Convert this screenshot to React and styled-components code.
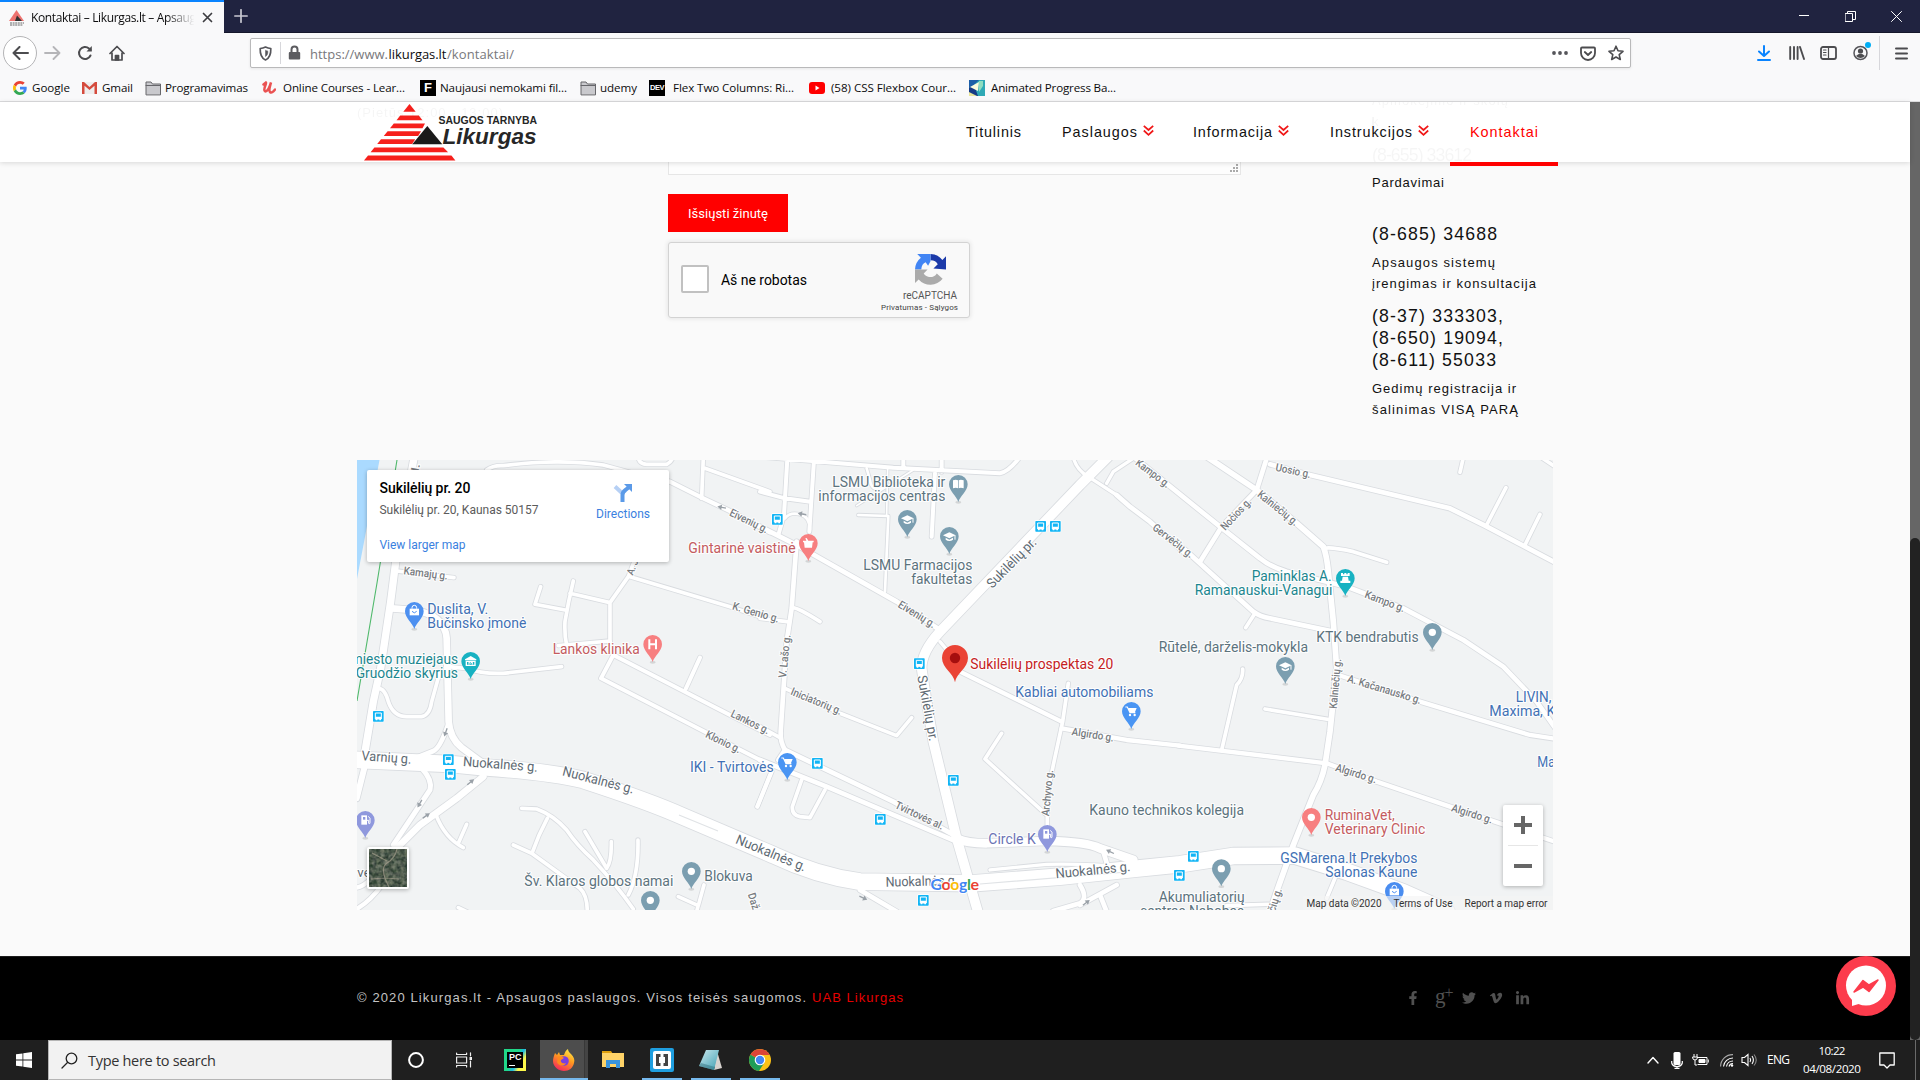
import React, { useLayoutEffect, useRef } from "react";
import styled, { createGlobalStyle, css } from "styled-components";
import { FaFacebookF, FaTwitter, FaVimeoV, FaLinkedinIn } from "react-icons/fa";

const UI = `"Open Sans", "Noto Sans", sans-serif`;
const ARIAL = `"Liberation Sans", Arial, sans-serif`;

const Global = createGlobalStyle`
  * { box-sizing: border-box; }
  body { margin: 0; background: #fafafa; overflow: hidden; }
  svg { display: block; flex: none; }
`;

/* ---------- text with a fixed measure ---------- */
const Txt = styled.span`
  display: inline-block;
  flex: none;
  white-space: nowrap;
  font-family: ${(p) => p.$font || UI};
  font-size: ${(p) => p.$size || 12}px;
  line-height: ${(p) => p.$lh || 16}px;
  font-weight: ${(p) => p.$weight || 400};
  color: ${(p) => p.$color || "#0c0c0d"};
  margin-left: ${(p) => p.$ml || 0}px;
  margin-top: ${(p) => p.$mt || 0}px;
`;

function Fit({ w, children, ...rest }) {
  const ref = useRef(null);
  useLayoutEffect(() => {
    const el = ref.current;
    el.style.width = "auto";
    el.style.letterSpacing = "0px";
    const natural = el.getBoundingClientRect().width;
    const n = Math.max(1, el.textContent.length - 1);
    el.style.letterSpacing = `${(w - natural) / n}px`;
    el.style.width = `${w}px`;
  }, [w]);
  return <Txt ref={ref} {...rest}>{children}</Txt>;
}

/* ---------- browser chrome ---------- */
const Screen = styled.div`
  width: 1920px; height: 1080px; display: flex; flex-direction: column; overflow: hidden;
`;
const TabStrip = styled.div`
  height: 33px; flex: none; display: flex; align-items: center; background: #202340;
  border-bottom: 1px solid #15172b;
`;
const Tab = styled.div`
  width: 224px; height: 33px; display: flex; align-items: center; background: #f9f9fa;
  border-top: 2px solid #0a84ff; padding-left: 9px; align-self: flex-start;
`;
const TabTitle = styled.div`
  margin-left: 6px; width: 165px; overflow: hidden; display: flex;
  mask-image: linear-gradient(90deg, #000 82%, transparent 99%);
`;
const Gap = styled.div`flex: 1;`;
const IconBox = styled.div`
  margin-left: ${(p) => p.$ml || 0}px; margin-top: ${(p) => p.$mt || 0}px; flex: none;
`;
const ToolBar = styled.div`
  height: 41px; flex: none; display: flex; align-items: center; background: #f9f9fa; padding: 0 0 1px 3px;
`;
const BackButton = styled.div`
  width: 34px; height: 34px; border-radius: 50%; border: 1px solid #b4b4b6; background: #fff;
  display: grid; place-items: center;
`;
const UrlBar = styled.div`
  margin-left: 125px; width: 1381px; height: 30px; border: 1px solid #b9b9ba; border-radius: 2px;
  background: #fff; display: flex; align-items: center; box-shadow: 0 1px 3px rgba(0,0,0,.08);
`;
const Divider = styled.div`
  width: 1px; height: ${(p) => p.$h}px; background: #d7d7db; margin-left: ${(p) => p.$ml}px;
`;
const Bookmarks = styled.div`
  height: 28px; flex: none; display: flex; align-items: center; background: #f9f9fa;
  border-bottom: 1px solid #dcdcde; padding-left: 13px;
`;
const Bookmark = styled.div`
  display: flex; align-items: center; width: ${(p) => p.$w}px; flex: none;
`;
const BookIcon = styled.div`width: ${(p) => p.$w}px; flex: none;`;
const SquareIcon = styled.div`
  width: 16px; height: 16px; background: #000; color: #fff; text-align: center;
  font: ${(p) => p.$font}; letter-spacing: ${(p) => p.$ls || 0}px;
`;

const S = ({ w = 16, h = 16, vb, children, sw = 1.8, c = "#4c4c4f", fill = "none" }) => (
  <svg width={w} height={h} viewBox={vb || `0 0 ${w} ${h}`} fill={fill} stroke={c} strokeWidth={sw} strokeLinecap="round" strokeLinejoin="round">{children}</svg>
);

const Folder = () => (
  <S sw="1" c="#66666a" fill="#c9c9cd"><path d="M1 14.5V2h5l1.5 2H15.5v10.5z" /><path d="M1 5.500h14.500" /></S>
);
const bookmarks = [
  [69, 19, "Google", 38, <svg width="14" height="14" viewBox="0 0 48 48"><path fill="#EA4335" d="M24 9.5c3.5 0 6.700 1.200 9.200 3.600l6.900-6.900C35.900 2.400 30.500 0 24 0 14.600 0 6.500 5.400 2.600 13.200l8 6.200C12.400 13.700 17.700 9.500 24 9.500z" /><path fill="#4285F4" d="M47 24.600c0-1.600-.2-3.100-.4-4.600H24v9h12.900c-.6 3-2.200 5.500-4.800 7.200l7.700 6C44.400 38 47 31.800 47 24.600z" /><path fill="#FBBC05" d="M10.500 28.600c-.5-1.500-.8-3-.8-4.600s.3-3.100.8-4.600l-8-6.200C.9 16.500 0 20.100 0 24s.9 7.500 2.600 10.800z" /><path fill="#34A853" d="M24 48c6.500 0 11.900-2.100 15.900-5.800l-7.700-6c-2.200 1.500-4.900 2.300-8.200 2.300-6.300 0-11.600-4.200-13.500-9.900l-8 6.200C6.500 42.600 14.600 48 24 48z" /></svg>],
  [63, 20, "Gmail", 31, <svg width="15" height="12" viewBox="0 0 15 12"><rect width="15" height="12" fill="#eee" /><path d="M0 0h2l5.500 5L13 0h2v12h-2.500V3.800l-5 4.200-5-4.200V12H0z" fill="#d54b3d" /></svg>],
  [117, 20, "Programavimas", 83, <Folder />],
  [158, 21, "Online Courses - Lear...", 122, <svg width="14" height="13" viewBox="0 0 14 13" fill="none" stroke="#ea5252" strokeWidth="2.500" strokeLinecap="round"><path d="M1.500 3.500 4 1.500C4.800 2 1.500 7 2.500 9.500 3.500 12 6.500 9 8 4.500l1-3C8 5 6.500 9.500 8 11s3.500-.5 5-2.500" /></svg>],
  [160, 20, "Naujausi nemokami fil...", 127, <SquareIcon $font={`bold 13px/16px ${ARIAL}`}>F</SquareIcon>],
  [69, 20, "udemy", 37, <Folder />],
  [160, 24, "Flex Two Columns: Ri...", 121, <SquareIcon $font={`bold 7.5px/16px ${ARIAL}`} $ls={-0.5}>DEV</SquareIcon>],
  [160, 22, "(58) CSS Flexbox Cour...", 125, <svg width="16" height="12" viewBox="0 0 16 12"><rect width="16" height="12" rx="3" fill="#f00" /><path d="M6.500 3.500v5l4-2.500z" fill="#fff" /></svg>],
  [160, 22, "Animated Progress Ba...", 125, <svg width="16" height="16" viewBox="0 0 16 16"><path d="M0 0h16v16H0z" fill="#2fa9b5" /><path d="M0 0h10L5 5 0 8z" fill="#1c5fa8" /><path d="M0 8l5-3 4 11H0z" fill="#173b86" /><path d="M1 7 10 2l-1 9z" fill="#fbfbdd" /><path d="M10 1l4 0 0 5-4 6z" fill="#8fdcc0" /><path d="M0 12l8 4H0z" fill="#e8e59a" /></svg>],
];

/* ---------- site ---------- */
const PageRow = styled.div`height: 938px; flex: none; display: flex; position: relative;`;
const Site = styled.div`width: 1910px; background: #fafafa; display: flex; flex-direction: column;`;
const Scroll = styled.div`width: 10px; background: #666; padding-top: 436px;`;
const Thumb = styled.div`height: 502px; background: #222; border-radius: 5px;`;
const Header = styled.header`
  height: 60px; flex: none; display: flex; background: #fff; position: relative; z-index: 2;
  box-shadow: 0 1px 5px rgba(0,0,0,.14); padding-left: 360px;
`;
const Ghost = styled.div`
  position: absolute; overflow: hidden; opacity: .035; left: ${(p) => p.$x}px; top: 0; height: 60px;
  display: flex; flex-direction: column;
`;
const Nav = styled.nav`display: flex; margin-left: 406px;`;
const NavItem = styled.div`
  height: ${(p) => (p.$active ? 64 : 60)}px; padding: 0 20px; width: ${(p) => p.$w}px;
  border-bottom: ${(p) => (p.$active ? "4px solid #f00" : "0")}; display: flex; align-items: flex-start;
`;
const FormArea = styled.section`height: 298px; flex: none; display: flex; padding-left: 668px;`;
const FormCol = styled.div`width: 573px; display: flex; flex-direction: column; align-items: flex-start;`;
const TextArea = styled.div`
  width: 573px; height: 13px; border: 1px solid #e6e6e6; border-top: 0; background: #fdfdfd;
  display: flex; justify-content: flex-end; padding: 2px 2px 0 0;
`;
const Send = styled.div`
  width: 120px; height: 38px; margin-top: 19px; background: #f00; display: flex; align-items: center; justify-content: center;
`;
const Captcha = styled.div`
  width: 302px; height: 76px; margin-top: 10px; border: 1px solid #d3d3d3; border-radius: 3px; background: #f9f9f9;
  box-shadow: 0 0 4px 1px rgba(0,0,0,.08); display: flex; align-items: center; padding-left: 12px;
`;
const Check = styled.div`width: 28px; height: 28px; border: 2px solid #c1c1c1; border-radius: 2px; background: #fff; margin-top: -2px;`;
const Brand = styled.div`width: 78px; margin-left: 73px; height: 74px; display: flex; flex-direction: column; align-items: flex-end; padding-top: 11px;`;
const BrandMark = styled.div`margin-right: 12px;`;
const BrandName = styled.div`display: flex; margin-right: 1px;`;
const Contacts = styled.div`margin-left: 131px; display: flex; flex-direction: column; align-items: flex-start; padding-top: 10px;`;
const Footer = styled.footer`
  height: 84px; flex: none; margin-top: auto; background: #000; border-top: 1px solid #1c1c1c;
  display: flex; align-items: center; padding-left: 357px; position: relative;
`;
const Socials = styled.div`display: flex; align-items: center; margin: -1px 0 0 503px; color: #505050;`;
const GPlus = styled.span`display: flex; font: 21px/16px "Liberation Serif", serif; margin: -5px 0 0 15px; width: 27px;`;
const Plus = styled.span`font-size: 16px; line-height: 10px; margin-left: -1px;`;
const Messenger = styled.div`position: absolute; left: 1836px; top: -1px;`;

const Chevron = () => (
  <IconBox $ml={6} $mt={23}>
    <svg width="11" height="11" viewBox="0 0 11 11" fill="none" stroke="#f01818" strokeWidth="1.700"><path d="M.8.800 5.500 5 10.200.800M.8 5.500l4.700 4.300 4.700-4.300" /></svg>
  </IconBox>
);

const Logo = () => (
  <svg width="180" height="60" viewBox="360 102 180 60">
    <g fill="#f6201c">
      <path d="M409.500 104l6.200 7.700h-12.400z" />
      <path d="M400.200 115.600h18.600l3.700 4.700h-26z" />
      <path d="M393.800 123.600H425l-2.500 4.700h-32.500z" />
      <path d="M387.600 131.300h33.400l-2.800 4.700h-34.400z" />
      <path d="M381 139.300h34.200l-3 4.700h-35z" />
      <path d="M374.400 147.600h69l4.700 4.700h-77.500z" />
      <path d="M368 155.600h83.400l4 4.900h-91.400z" />
    </g>
    <path d="M427.300 126 442.300 144.200h-30z" fill="#1a1a1a" />
    <g fontFamily={ARIAL} fontWeight="bold" fill="#262626">
      <text x="438.500" y="124.300" fontSize="11" textLength="98.500" lengthAdjust="spacingAndGlyphs">SAUGOS TARNYBA</text>
      <text x="442.500" y="144.300" fontSize="22" fontStyle="italic" textLength="94" lengthAdjust="spacingAndGlyphs">Likurgas</text>
    </g>
  </svg>
);

/* ---------- map drawing: three side-by-side sheets at 3 units per pixel ---------- */
const SHEET_X = [350, 760, 1160];
const roads = [
  // sheet, width, path
  [0, 22, "M192 10L145 260L122 440L92 640L70 740L45 890"],
  [0, 18, "M20 1030L44 935"],
  [0, 11, "M140 348L312 368"],
  [0, 20, "M125 460L190 465Q285 480 290 550L296 800Q300 850 335 878L405 930"],
  [0, 14, "M294 810Q270 880 250 888L190 912"],
  [0, 11, "M85 700Q105 700 115 740Q130 785 170 785L215 785Q240 780 245 740L270 650"],
  [0, 11, "M296 635L345 640Q400 658 460 655L635 635"],
  [0, 15, "M215 940Q248 975 240 1005L130 1170"],
  [0, 20, "M400 965L320 1030L210 1110L130 1190"],
  [0, 13, "M20 1362Q60 1340 100 1285L150 1180"],
  [0, 13, "M20 1298Q60 1290 110 1210"],
  [0, 11, "M258 1080Q285 1150 340 1178M350 1108L325 1165"],
  [0, 11, "M515 1060L560 1062Q610 1080 650 1125Q680 1170 730 1215Q800 1290 850 1362M592 1090Q565 1140 548 1190M490 1170L545 1195L690 1300Q712 1320 712 1370M705 1130L770 1240M784 1160Q785 1220 770 1240M864 1155Q866 1260 835 1320M985 1325L1045 1352L1062 1290M1045 1350L1040 1370M325 1358L350 1370"],
  [0, 11, "M572 395L555 448L645 465M670 378Q655 440 645 500Q643 540 650 570M660 415L780 443M852 320L835 365L780 443L780 560M625 572L780 558M840 365L1140 455L1240 488"],
  [0, 12, "M780 560L790 600L753 670L1060 828L1260 930M790 600L1140 780L1260 840M1050 608L1008 700M1222 1055L1265 950"],
  [0, 11, "M410 45Q430 30 460 32Q620 10 760 30Q860 60 960 80M865 10Q870 28 890 28L950 28Q965 20 968 8M1060 8L1055 130M1065 40L1260 110"],
  [0, 13, "M960 80L1060 130L1140 168L1260 232"],
  [1, 12, "M0 5L400 38L720 55Q745 50 775 12M82 12L72 180L55 240M162 15L148 230M0 110L75 130L150 140M430 8V38M545 8V50M525 55L515 245"],
  [1, 8, "M75 190Q90 170 120 178Q150 185 150 225M320 40L330 75Q335 110 365 100"],
  [1, 5, "M383 40L380 180M290 152L460 45"],
  [1, 8, "M295 180L385 183L375 410"],
  [1, 14, "M0 215L100 265L410 440L540 525"],
  [1, 14, "M110 260L95 460L80 560L62 830Q60 860 75 885L55 915"],
  [1, 11, "M95 458Q110 455 180 500M0 490L80 500M75 700L240 775L410 842L455 788M0 815L60 848M30 960L-8 1055M125 975L97 1055Q95 1080 120 1085L150 1088L195 1005"],
  [1, 14, "M75 885L400 1040L590 1145M0 915L200 995L590 1160"],
  [1, 10, "M940 8Q950 45 985 65M1120 10L1060 50L1040 85M985 65L1070 120M540 560L565 590"],
  [1, 14, "M1070 120L1110 155L1170 200L1270 290"],
  [1, 13, "M600 650L905 800M905 820L1100 855L1260 872"],
  [1, 11, "M925 685L908 800L880 930L862 1020L862 1150M725 835L675 912L860 1080"],
  [1, 10, "M690 1245L860 1228Q1000 1225 1120 1240"],
  [1, 14, "M1030 1190L1045 1240M960 1290Q985 1330 960 1345L880 1368M1070 1290L960 1350M1020 1320L1040 1370M300 1305L410 1370"],
  [2, 14, "M-80 5L180 215L300 310Q330 335 380 350L560 395L730 460L910 555L1030 635L1130 740L1190 825"],
  [2, 14, "M320 10L290 105L185 215L120 320"],
  [2, 14, "M330 28L450 60L870 160L975 212L1190 325"],
  [2, 11, "M910 8L900 52M1038 98L980 210M1140 178L1095 270M1145 8L1190 38M495 280Q510 275 580 290L680 322"],
  [2, 14, "M70 280L280 470Q300 485 330 490L520 530"],
  [2, 11, "M285 475L257 518M248 642Q250 670 230 690L185 885M315 762L515 795M525 1270L500 1330M200 1352L325 1348"],
  [2, 13, "M535 660L780 740L1110 840L1190 852M55 872L500 925"],
  [2, 13, "M500 925L650 980L870 1055L1190 1162"],
  [2, 17, "M140 5L290 105L410 205L490 275Q500 300 505 350L520 500L530 640L510 830L495 930Q485 980 460 1020L400 1170L350 1310L330 1370"],
  [1, 26, "M590 1150Q620 1165 680 1165L860 1158Q980 1160 1020 1180L1120 1215"],
  [1, 29, "M1045 5L960 90L540 530Q485 590 485 640L500 740L520 860L590 1150L655 1375"],
  [0, 50, "M10 914L300 927L400 937Q600 950 700 975Q900 1040 1000 1085L1270 1200Q1400 1262 1530 1280L1870 1285L2130 1265L2350 1242L2490 1228L2650 1203L2835 1202L2990 1250L3160 1312L3290 1370"],
];
const RoadLayer = ({ extra, color }) => roads.map(([s, w, d], i) => (
  <path key={i} transform={`translate(${SHEET_X[s]} 455) scale(.3333)`} d={d} fill="none" stroke={color} strokeWidth={w + extra} strokeLinecap="round" strokeLinejoin="round" />
));

const C = { gray: "#5c737d", blue: "#4171b5", red: "#c45b5f", teal: "#1b868f", road: "#777b7f", main: "#5e6a73", pur: "#6b73b5", pin: "#c5221f" };
const labels = [
  // sheet, x1, y1, x2, y2, text, size, colour
  [0, 232, 477, 415, 477, "Duslita, V.", 42, C.blue], [0, 232, 519, 529, 519, "Bučinsko įmonė", 42, C.blue],
  [0, 2, 627, 324, 627, "miesto muziejaus", 42, C.teal], [0, 17, 669, 324, 669, "Gruodžio skyrius", 42, C.teal],
  [0, 608, 597, 869, 597, "Lankos klinika", 42, C.red],
  [0, 523, 1293, 970, 1293, "Šv. Klaros globos namai", 42, C.gray], [0, 1063, 1278, 1208, 1278, "Blokuva", 42, C.gray],
  [0, 1020, 951, 1271, 951, "IKI - Tvirtovės", 42, C.blue], [0, 1015, 294, 1337, 294, "Gintarinė vaistinė", 42, C.red],
  [0, 160, 358, 292, 374, "Kamajų g.", 33, C.road], [0, 1136, 181, 1248, 235, "Eivenių g.", 33, C.road],
  [0, 1145, 463, 1284, 503, "K. Genio g.", 33, C.road], [0, 1140, 784, 1252, 838, "Lankos g.", 33, C.road],
  [0, 1064, 846, 1166, 895, "Klonio g.", 33, C.road],
  [0, 848, 362, 866, 318, "A. J", 30, C.road], [0, 202, 70, 210, 28, "N.", 33, C.road],
  [0, 34, 916, 183, 926, "Varnių g.", 41, C.main], [0, 338, 933, 562, 950, "Nuokalnės g.", 41, C.main],
  [0, 635, 961, 848, 1016, "Nuokalnės g.", 41, C.main], [0, 1154, 1164, 1362, 1250, "Nuokalnės g.", 41, C.main],
  [0, 22, 1266, 62, 1266, "ve", 38, C.main], [0, 1193, 1318, 1208, 1366, "Daž", 33, C.road],
  [1, 217, 96, 556, 96, "LSMU Biblioteka ir", 42, C.gray], [1, 175, 138, 556, 138, "informacijos centras", 42, C.gray],
  [1, 310, 345, 637, 345, "LSMU Farmacijos", 42, C.gray], [1, 454, 387, 637, 387, "fakultetas", 42, C.gray],
  [1, 631, 642, 1060, 642, "Sukilėlių prospektas 20", 42, C.pin],
  [1, 766, 726, 1180, 726, "Kabliai automobiliams", 42, C.blue],
  [1, 988, 1080, 1452, 1080, "Kauno technikos kolegija", 42, C.gray], [1, 685, 1167, 827, 1167, "Circle K", 42, C.pur],
  [1, 412, 455, 518, 520, "Eivenių g.", 33, C.road], [1, 78, 670, 92, 540, "V. Lašo g.", 33, C.road],
  [1, 90, 718, 240, 780, "Iniciatorių g.", 33, C.road], [1, 403, 1058, 545, 1125, "Tvirtovės al.", 33, C.road],
  [1, 867, 1084, 880, 946, "Archyvo g.", 33, C.road], [1, 934, 840, 1060, 860, "Algirdo g.", 33, C.road],
  [1, 1124, 28, 1220, 100, "Kampo g.", 33, C.road], [1, 1175, 222, 1290, 310, "Gervėčių g.", 33, C.road],
  [1, 697, 402, 832, 264, "Sukilėlių pr.", 41, C.main], [1, 472, 664, 508, 860, "Sukilėlių pr.", 41, C.main],
  [1, 377, 1295, 594, 1290, "Nuokalnės g.", 41, C.main], [1, 888, 1270, 1112, 1248, "Nuokalnės g.", 41, C.main],
  [2, 345, 47, 450, 69, "Uosio g.", 33, C.road], [2, 290, 122, 404, 214, "Kalniečių g.", 33, C.road],
  [2, 196, 228, 276, 142, "Nočios g.", 33, C.road], [2, 612, 427, 730, 472, "Kampo g.", 33, C.road],
  [2, 560, 680, 780, 747, "A. Kačanausko g.", 33, C.road], [2, 530, 762, 544, 612, "Kalniečių g.", 33, C.road],
  [2, 524, 947, 646, 985, "Algirdo g.", 33, C.road], [2, 872, 1068, 994, 1106, "Algirdo g.", 33, C.road],
  [2, 345, 1372, 366, 1304, "čių g.", 33, C.road],
  [2, 275, 378, 515, 378, "Paminklas A.", 42, C.teal], [2, 104, 420, 517, 420, "Ramanauskui-Vanagui", 42, C.teal],
  [2, 469, 561, 776, 561, "KTK bendrabutis", 42, C.gray], [2, -4, 591, 444, 591, "Rūtelė, darželis-mokykla", 42, C.gray],
  [2, 1067, 741, 1174, 741, "LIVIN,", 42, C.blue], [2, 988, 783, 1186, 783, "Maxima, K", 42, C.blue], [2, 1132, 935, 1185, 935, "Ma", 42, C.blue],
  [2, 494, 1095, 704, 1095, "RuminaVet,", 42, C.red], [2, 494, 1137, 796, 1137, "Veterinary Clinic", 42, C.red],
  [2, 361, 1224, 772, 1224, "GSMarena.lt Prekybos", 42, C.blue], [2, 496, 1266, 772, 1266, "Salonas Kaune", 42, C.blue],
  [2, -4, 1341, 254, 1341, "Akumuliatorių", 42, C.gray], [2, -60, 1383, 252, 1383, "centras Nabobas", 42, C.gray],
];
const glyphs = {
  bag: <><path d="M-14-8h28v20h-28z" fill="#fff" /><path d="M-7-8v-3a7 7 0 0 1 14 0v3" fill="none" stroke="#fff" strokeWidth="3" /><path d="M-7 0q7 9 14 0" fill="none" stroke="#4a8df0" strokeWidth="3" /></>,
  cart: <><path d="M-18-13h6l8 17h16" fill="none" stroke="#fff" strokeWidth="3.500" /><path d="M-10-10h26l-5 12h-16z" fill="#fff" /><circle cx="-4" cy="11" r="3.500" fill="#fff" /><circle cx="10" cy="11" r="3.500" fill="#fff" /></>,
  h: <path d="M-10-15v30M10-15v30M-10 0h20" stroke="#fff" strokeWidth="6" fill="none" />,
  museum: <><path d="M-17-6 0-16 17-6v3h-34z" fill="#fff" /><path d="M-13 0h26v12h-26z" fill="none" stroke="#fff" strokeWidth="4" /><path d="M-5 10V1l5 5 5-5v9" fill="none" stroke="#fff" strokeWidth="3" /></>,
  cap: <><path d="M-19-3 0-12 19-3 0 6z" fill="#fff" /><path d="M-11 4v6q11 8 22 0V4L0 10z" fill="#fff" /><path d="M17-3v13" stroke="#fff" strokeWidth="3" /></>,
  book: <><path d="M-16-12q9-4 15 0v24q-6-4-15 0zM16-12q-9-4-15 0v24q6-4 15 0z" fill="#fff" /></>,
  dot: <circle r="11" fill="#fff" />,
  fuel: <><path d="M-12-15h17v28h-17z" fill="#fff" /><path d="M-7-10h7v8h-7z" fill="#8f98dd" /><path d="M5 0h5v9q4 3 4-2V-6L9-12" fill="none" stroke="#fff" strokeWidth="3" /></>,
  tower: <><path d="M-13-16h6v4h4v-4h6v4h4v-4h6v9H-13zM-8-5H8l2 12h5v7h-30V7h5z" fill="#fff" /></>,
  mortar: <path d="M-16-8h10l-3-7 4-1 5 8h16v5h-3l-2 16h-22l-2-16h-3z" fill="#fff" />,
};
const pins = [
  [0, 193, 469, "#4d90f0", "bag"], [0, 362, 619, "#18b2c2", "museum"], [0, 908, 568, "#f77f80", "h"],
  [0, 1024, 1249, "#7b9eb0", "dot"], [0, 901, 1336, "#7b9eb0", "dot"], [0, 46, 1096, "#8f98dd", "fuel"],
  [1, 145, 265, "#f77f80", "mortar"], [1, 595, 88, "#7b9eb0", "book"], [1, 442, 193, "#7b9eb0", "cap"], [1, 568, 244, "#7b9eb0", "cap"],
  [1, 1114, 769, "#4a95f3", "cart"], [1, 82, 922, "#4a95f3", "cart"], [1, 862, 1138, "#8f98dd", "fuel"],
  [2, 556, 370, "#18b2c2", "tower"], [2, 817, 532, "#7b9eb0", "dot"], [2, 376, 634, "#7b9eb0", "cap"],
  [2, 454, 1087, "#f77f80", "dot"], [2, 184, 1241, "#7b9eb0", "dot"], [2, 703, 1309, "#4a8df0", "bag"],
];
const stops = [[0, 85, 784], [0, 295, 914], [0, 301, 958], [1, 52, 193], [1, 842, 214], [1, 886, 214], [1, 478, 626], [1, 172, 925], [1, 580, 976], [1, 361, 1093], [1, 490, 1336], [2, 100, 1204], [2, 58, 1261]];
const arrows = [[0, 287, 832, 110], [0, 209, 1046, 120], [0, 229, 1082, -35], [0, 362, 981, -38], [0, 1115, 157, 190], [1, 126, 177, 190], [1, 310, 1329, 25], [1, 1050, 1190, 205], [1, 979, 1343, -38]];

const at = (s, x, y) => `translate(${SHEET_X[s] + x / 3} ${455 + y / 3}) scale(.3333)`;

const MapDrawing = () => (
  <svg width="1196" height="450" viewBox="357 460 1196 450">
    <rect x="357" y="460" width="1196" height="450" fill="#f1f3f4" />
    <path d="M357 460h22.500L357 579z" fill="#aadaff" />
    <path d="M397 460 377 583 357 701" fill="none" stroke="#4fb96b" strokeWidth="1.100" />
    <RoadLayer extra={5} color="#d9dce0" />
    <RoadLayer extra={0} color="#fff" />
    <path d="M679 815 718 831M980 884 1127 872" stroke="#e0e3e6" strokeWidth="1.200" fill="none" />
    {arrows.map(([s, x, y, a], i) => (
      <g key={i} transform={`${at(s, x, y)} rotate(${a})`}>
        <path d="M-13 0H4" stroke="#9aa1a8" strokeWidth="4" />
        <path d="M0-8 13 0 0 8z" fill="#9aa1a8" />
      </g>
    ))}
    {stops.map(([s, x, y], i) => (
      <g key={i} transform={at(s, x, y)}>
        <rect x="-18" y="-18" width="36" height="36" rx="4" fill="#fff" />
        <rect x="-16" y="-16" width="32" height="32" rx="2" fill="#12b5f5" />
        <path d="M-9-10h18v18H-9z" fill="none" stroke="#fff" strokeWidth="3" />
        <path d="M-9 1H9v7H-9zM-8 8h5v4h-5zM3 8h5v4H3z" fill="#fff" />
      </g>
    ))}
    <g fontFamily="Roboto, sans-serif">
      {labels.map(([s, x1, y1, x2, y2, t, size, color], i) => {
        const len = Math.hypot(x2 - x1, y2 - y1) / 3;
        const a = (Math.atan2(y2 - y1, x2 - x1) * 180) / Math.PI;
        return (
          <text key={i} transform={`translate(${SHEET_X[s] + x1 / 3} ${455 + y1 / 3}) rotate(${a})`} fontSize={size / 3} fontWeight={size < 35 ? 500 : 400}
            textLength={len} lengthAdjust="spacingAndGlyphs" fill={color} stroke="#fff" strokeOpacity=".9" strokeWidth="2.200" strokeLinejoin="round" paintOrder="stroke">{t}</text>
        );
      })}
    </g>
    {pins.map(([s, x, y, color, g], i) => (
      <g key={i} transform={at(s, x, y)}>
        <ellipse cx="0" cy="54" rx="9" ry="4" fill="#000" opacity=".12" />
        <path d="M0 53C-5 36-28 20-28 0A28 28 0 0 1 28 0C28 20 5 36 0 53z" fill={color} />
        {glyphs[g]}
      </g>
    ))}
    <g transform={at(1, 585, 609)}>
      <path d="M0 73C-4 45-39 30-39 0A39 39 0 0 1 39 0C39 30 4 45 0 73z" fill="#ea4335" />
      <circle r="15.500" fill="#a50e0e" />
    </g>
    <text x="930.500" y="889.500" fontFamily="Lato, sans-serif" fontWeight="700" fontSize="16" textLength="48.500" stroke="#fff" strokeWidth="2" paintOrder="stroke">
      <tspan fill="#4285f4">G</tspan><tspan fill="#ea4335">o</tspan><tspan fill="#fbbc05">o</tspan><tspan fill="#4285f4">g</tspan><tspan fill="#34a853">l</tspan><tspan fill="#ea4335">e</tspan>
    </text>
  </svg>
);

const MapBox = styled.section`width: 1196px; height: 450px; margin-left: 357px; flex: none; position: relative; overflow: hidden;`;
const overlay = css`position: absolute; background: #fff; border-radius: 2px; box-shadow: 0 1px 4px rgba(0,0,0,.28);`;
const PlaceCard = styled.div`
  ${overlay} left: 10px; top: 10px; width: 302px; height: 92px; display: flex; justify-content: space-between; padding: 9px 19px 0 12.5px;
`;
const Column = styled.div`display: flex; flex-direction: column; align-items: ${(p) => p.$align || "flex-start"}; padding-top: ${(p) => p.$pt || 0}px;`;
const Satellite = styled.div`${overlay} left: 10px; top: 387px; width: 42px; height: 42px; padding: 2px; overflow: hidden;`;
const Zoom = styled.div`${overlay} left: 1146px; top: 345px; width: 40px; height: 81px; display: flex; flex-direction: column; align-items: center;`;
const ZoomKey = styled.div`height: 40px; display: grid; place-items: center;`;
const ZoomLine = styled.div`width: 30px; height: 1px; background: #e6e6e6;`;
const Attribution = styled.div`
  position: absolute; right: 0; bottom: 0; height: 14px; width: 250px; background: rgba(245,245,245,.65); display: flex; padding: 1px 0 0 3.5px;
`;

/* ---------- task bar ---------- */
const TaskBar = styled.div`height: 40px; flex: none; display: flex; background: #1f1f1f; align-items: center;`;
const Start = styled.div`width: 48px; padding-left: 16px;`;
const Search = styled.div`width: 344px; height: 40px; background: #f2f2f2; border: 1px solid #b5b5b5; display: flex; align-items: center; padding-left: 12px;`;
const TaskCell = styled.div`
  width: ${(p) => p.$w}px; margin-left: ${(p) => p.$ml || 0}px; height: 40px; display: grid; place-items: center; padding-top: 2px;
  background: ${(p) => (p.$active ? "linear-gradient(90deg,#4d4d4d 44px,#2c2c2c 44px,#444 45px)" : "transparent")};
  border-bottom: 2px solid ${(p) => (p.$open ? "#76b9ed" : "transparent")}; background-clip: padding-box;
`;
const PcBox = styled.div`
  width: 22px; height: 22px; padding: 3px; background: linear-gradient(120deg,#21d789 45%,#1cb8e8 60%,#fcf84a 75%);
`;
const PcInner = styled.div`width: 16px; height: 16px; background: #000; color: #fff; font: bold 9px/9px ${ARIAL}; padding: 1px 0 0 2px;`;
const PcLine = styled.div`width: 6px; height: 1px; background: #fff; margin: 3px 0 0 0;`;
const Clock = styled.div`display: flex; flex-direction: column; align-items: center; margin-left: 13px; width: 58px;`;
const Peek = styled.div`width: 1px; height: 40px; background: #6a6a6a; margin: 0 4px 0 20px;`;

const small = { $font: ARIAL, $size: 13, $lh: 21, $color: "#111" };
const phone = { $font: ARIAL, $size: 17.7, $lh: 22, $color: "#111" };
const nav = { $font: ARIAL, $size: 14.4, $lh: 20, $mt: 20, $color: "#111" };
const rob = { $font: "Roboto, sans-serif" };

export default function App() {
  return (
    <Screen>
      <Global />
      <TabStrip>
        <Tab>
          <svg width="16" height="16" viewBox="0 0 16 16"><path d="M7.500 0 15 11H0z" fill="#ee7370" /><path d="M8 5.500 13 11H6z" fill="#333" /><path d="M1 13h14M1 15h13" stroke="#666" strokeDasharray="2 .6" /></svg>
          <TabTitle><Fit w={172}>Kontaktai – Likurgas.lt – Apsaugo</Fit></TabTitle>
          <IconBox $ml={6}><S w={11} h={11} sw="1.700" c="#3c3c40"><path d="M1.500 1.500l8 8M9.500 1.500l-8 8" /></S></IconBox>
        </Tab>
        <IconBox $ml={10}><S w={14} h={14} sw="1.700" c="#c9c9d2"><path d="M7 .8v12.400M.8 7h12.400" /></S></IconBox>
        <Gap />
        <S w={10} h={10} c="#fff" sw="1"><path d="M0 4.500h10" /></S>
        <IconBox $ml={36}><S w={11} h={11} c="#fff" sw="1"><path d="M.5 2.500h7v8h-7zM2.500 2.500v-2h8v8h-3" /></S></IconBox>
        <IconBox $ml={35}><S w={11} h={11} c="#fff" sw="1"><path d="M.5.500l10 10M10.500.500l-10 10" /></S></IconBox>
        <IconBox $ml={18} />
      </TabStrip>
      <ToolBar>
        <BackButton><S w={17} h={14} sw="2"><path d="M16 7H1.500M7.500 1l-6 6 6 6" /></S></BackButton>
        <IconBox $ml={7}><S w={17} h={14} sw="1.800" c="#b5b5b8"><path d="M1 7h14.500M9.500 1l6 6-6 6" /></S></IconBox>
        <IconBox $ml={16}><S w={16} h={16} sw="2"><path d="M13.500 10.500A6 6 0 1 1 12 3.500l1.500 1.500" /><path d="M14.800 1v5.500H9.500z" fill="#4c4c4f" stroke="none" /></S></IconBox>
        <IconBox $ml={16}><S w={16} h={16} sw="1.700"><path d="M1 8.500 8 1.500l7 7M3 8v7h10V8" /><path d="M6.500 15v-4.500h3V15z" fill="#4c4c4f" /></S></IconBox>
        <UrlBar>
          <IconBox $ml={8}><S w={13} h={15} sw="1.700" c="#55555a"><path d="M1.200 2.500Q4 2.300 6.500 1 9 2.300 11.800 2.500C12 8 11 12 6.500 14 2 12 1 8 1.200 2.500z" /><path d="M6.500 4.500v6c2-1.300 2.500-3 2.300-5.200z" fill="#55555a" strokeWidth=".5" /></S></IconBox>
          <Divider $h={22} $ml={8} />
          <IconBox $ml={7} $mt={-1}><S w={13} h={15} sw="2" c="#5c5c60"><path d="M3.500 7V4.500a3 3 0 0 1 6 0V7" /><rect x=".8" y="7" width="11.400" height="7.500" rx="1" fill="#5c5c60" stroke="none" /></S></IconBox>
          <Fit w={78} $size={13} $ml={9} $mt={1} $color="#78787c">https://www.</Fit>
          <Fit w={58} $size={13} $ml={0.5} $mt={1}>likurgas.lt</Fit>
          <Fit w={67} $size={13} $ml={0.5} $mt={1} $color="#78787c">/kontaktai/</Fit>
          <Gap />
          <svg width="16" height="4" fill="#55555a"><circle cx="2" cy="2" r="1.900" /><circle cx="8" cy="2" r="1.900" /><circle cx="14" cy="2" r="1.900" /></svg>
          <IconBox $ml={12}><S w={16} h={15}><path d="M2 1.500h12q1 0 1 1V7a7 7 0 0 1-14 0V2.500q0-1 1-1z" /><path d="M4.800 6 8 9l3.200-3" /></S></IconBox>
          <IconBox $ml={12}><S w={16} h={16} sw="1.600"><path d="M8 1.200l2 4.600 5 .5-3.800 3.300 1.100 4.900L8 12l-4.300 2.500 1.100-4.900L1 6.300l5-.5z" /></S></IconBox>
          <IconBox $ml={6} />
        </UrlBar>
        <IconBox $ml={126}><S w={14} h={16} c="#0a84ff" sw="2"><path d="M7 1v9.500M2 6.500l5 4.500 5-4.500M1 15h12" /></S></IconBox>
        <IconBox $ml={18}><S w={16} h={14} sw="1.900"><path d="M1.200 1v12M5 1v12M8.600 1v12M11 1l4 12" /></S></IconBox>
        <IconBox $ml={15}><S w={17} h={14} sw="1.800"><rect x="1" y="1" width="15" height="12" rx="2" /><path d="M8.500 1v12M3.500 4H6M3.500 6.500H6M3.500 9H6" strokeWidth="1.200" /></S></IconBox>
        <IconBox $ml={16} $mt={-5}><svg width="18" height="20" viewBox="0 0 18 20"><circle cx="7.500" cy="12" r="6.500" fill="none" stroke="#55555a" strokeWidth="1.500" /><circle cx="7.500" cy="10" r="2.600" fill="#4c4c4f" /><path d="M3 15q4.500-4.500 9 0-4.500 4-9 0z" fill="#4c4c4f" /><circle cx="15" cy="4" r="3" fill="#00aef5" /></svg></IconBox>
        <Divider $h={34} $ml={8} />
        <IconBox $ml={15}><S w={13} h={13} sw="2"><path d="M1 1.500h11M1 6.500h11M1 11.500h11" /></S></IconBox>
      </ToolBar>
      <Bookmarks>
        {bookmarks.map(([w, iw, t, tw, icon]) => (
          <Bookmark key={t} $w={w}><BookIcon $w={iw}>{icon}</BookIcon><Fit w={tw} $size={11.6}>{t}</Fit></Bookmark>
        ))}
      </Bookmarks>

      <PageRow>
        <Site>
          <Header>
            <Ghost $x={357}><Fit w={146} {...small}>(Pietūs 12:00 - 13:00)</Fit></Ghost>
            <Ghost $x={1372}>
              <Fit w={136} {...small} $mt={-12}>Apmokėjimo ir skolų</Fit>
              <Fit w={70} {...small}>klausimais</Fit>
              <Fit w={125} {...phone} $mt={12}>(8-655) 33612</Fit>
            </Ghost>
            <Logo />
            <Nav>
              <NavItem $w={96}><Fit w={55} {...nav}>Titulinis</Fit></NavItem>
              <NavItem $w={131}><Fit w={75} {...nav}>Paslaugos</Fit><Chevron /></NavItem>
              <NavItem $w={137}><Fit w={79} {...nav}>Informacija</Fit><Chevron /></NavItem>
              <NavItem $w={140}><Fit w={82} {...nav}>Instrukcijos</Fit><Chevron /></NavItem>
              <NavItem $w={108} $active><Fit w={68} {...nav} $color="#f00">Kontaktai</Fit></NavItem>
            </Nav>
          </Header>
          <FormArea>
            <FormCol>
              <TextArea><svg width="8" height="8" fill="#aaa"><path d="M6 0h2v2H6zM3 3h2v2H3zM6 3h2v2H6zM0 6h2v2H0zM3 6h2v2H3zM6 6h2v2H6z" /></svg></TextArea>
              <Send><Fit w={80} {...rob} $size={13} $mt={1} $color="#fff">Išsiųsti žinutę</Fit></Send>
              <Captcha>
                <Check />
                <Fit w={86} {...rob} $size={14} $ml={12} $color="#000">Aš ne robotas</Fit>
                <Brand>
                  <BrandMark>
                    <svg width="31" height="31" viewBox="0 0 64 64">
                      <path d="M64 31.900V4.600l-7.500 7.600A32 32 0 0 0 32 0v13c8 0 12 3 15 8l-9 9z" fill="#1c3aa9" />
                      <path d="M32 0H4.600l7.600 7.600A32 32 0 0 0 0 32h13c0-8 4-13 9-15l5 7 5-9z" fill="#4285f4" />
                      <path d="M0 32v28l7.500-7.500A32 32 0 0 0 57 51L45 40c-4 7-12 9-18 7-5-2-8-5-9-7l8-8z" fill="#ababab" />
                    </svg>
                  </BrandMark>
                  <BrandName><Fit w={54} {...rob} $size={10} $lh={12} $mt={5} $color="#555">reCAPTCHA</Fit></BrandName>
                  <Fit w={77} {...rob} $size={8} $lh={11} $color="#444">Privatumas - Sąlygos</Fit>
                </Brand>
              </Captcha>
            </FormCol>
            <Contacts>
              <Fit w={72} {...small}>Pardavimai</Fit>
              <Fit w={125} {...phone} $mt={30}>(8-685) 34688</Fit>
              <Fit w={123} {...small} $mt={7}>Apsaugos sistemų</Fit>
              <Fit w={164} {...small}>įrengimas ir konsultacija</Fit>
              <Fit w={131} {...phone} $mt={11}>(8-37) 333303,</Fit>
              <Fit w={131} {...phone}>(8-650) 19094,</Fit>
              <Fit w={124} {...phone}>(8-611) 55033</Fit>
              <Fit w={144} {...small} $mt={7}>Gedimų registracija ir</Fit>
              <Fit w={146} {...small}>šalinimas VISĄ PARĄ</Fit>
            </Contacts>
          </FormArea>
          <MapBox>
            <MapDrawing />
            <PlaceCard>
              <Column>
                <Fit w={91} {...rob} $weight={500} $size={14} $lh={18} $color="#000">Sukilėlių pr. 20</Fit>
                <Fit w={159} {...rob} $size={12} $mt={5} $color="#5b5b5b">Sukilėlių pr. 20, Kaunas 50157</Fit>
                <Fit w={86} {...rob} $size={12} $mt={19} $color="#3a7fe0">View larger map</Fit>
              </Column>
              <Column $align="center" $pt={3}>
                <svg width="20" height="20" viewBox="0 0 20 20"><path d="M2 4.500 9 11" stroke="#b6d0f5" strokeWidth="4" fill="none" /><path d="M9.500 20v-7q0-3 3-5l3-2.500" stroke="#5b9ae8" strokeWidth="4" fill="none" /><path d="M11 2h8v8z" fill="#5b9ae8" /></svg>
                <Fit w={54} {...rob} $size={12} $mt={4} $color="#3a7fe0">Directions</Fit>
              </Column>
            </PlaceCard>
            <Satellite>
              <svg width="38" height="38" viewBox="0 0 38 38">
                <filter id="ground" colorInterpolationFilters="sRGB"><feTurbulence type="fractalNoise" baseFrequency=".25" numOctaves="3" seed="4" /><feColorMatrix values=".5 0 0 0 .06  .45 .05 0 0 .11  .4 0 .05 0 .08  0 0 0 0 1" /></filter>
                <rect width="38" height="38" filter="url(#ground)" />
                <path d="M28 0Q26 9 18 14T20 38M3 4l15 8M2 30l14-1 14 1" fill="none" stroke="#a39c8c" strokeWidth="1.200" opacity=".7" />
              </svg>
            </Satellite>
            <Zoom>
              <ZoomKey><svg width="18" height="18"><path d="M9 0v18M0 9h18" stroke="#666" strokeWidth="4" /></svg></ZoomKey>
              <ZoomLine />
              <ZoomKey><svg width="18" height="4"><path d="M0 2h18" stroke="#666" strokeWidth="4" /></svg></ZoomKey>
            </Zoom>
            <Attribution>
              <Fit w={75} {...rob} $size={10} $lh={14} $color="#333">Map data ©2020</Fit>
              <Fit w={59} {...rob} $size={10} $lh={14} $ml={12} $color="#333">Terms of Use</Fit>
              <Fit w={83} {...rob} $size={10} $lh={14} $ml={12} $color="#333">Report a map error</Fit>
            </Attribution>
          </MapBox>
          <Footer>
            <Fit w={449} {...small} $mt={-3} $color="#c4c4c4">© 2020 Likurgas.lt - Apsaugos paslaugos. Visos teisės saugomos.</Fit>
            <Fit w={91} {...small} $mt={-3} $ml={6} $color="#e60000">UAB Likurgas</Fit>
            <Socials>
              <FaFacebookF size={14} />
              <GPlus>g<Plus>+</Plus></GPlus>
              <FaTwitter size={14} />
              <IconBox $ml={13}><FaVimeoV size={14} /></IconBox>
              <IconBox $ml={12}><FaLinkedinIn size={15} /></IconBox>
            </Socials>
            <Messenger>
              <svg width="60" height="60" viewBox="0 0 60 60"><circle cx="30" cy="30" r="30" fill="#fc3c4c" /><circle cx="30" cy="29.500" r="20" fill="#fff" /><path d="M16 38v12l10-3z" fill="#fff" /><path d="M18 36 27 24.500 33 29 42 24 33 35.500 27 31z" fill="#fc3c4c" stroke="#fc3c4c" strokeWidth="1.500" strokeLinejoin="round" /></svg>
            </Messenger>
          </Footer>
        </Site>
        <Scroll><Thumb /></Scroll>
      </PageRow>

      <TaskBar>
        <Start><svg width="16" height="16" fill="#fff"><path d="M0 2.300 6.500 1.400v6.200H0zM7.300 1.300 16 0v7.600H7.300zM0 8.400h6.500v6.200L0 13.700zM7.300 8.400H16V16l-8.700-1.300z" /></svg></Start>
        <Search>
          <S w={17} h={17} sw="1.300" c="#222"><circle cx="10.500" cy="6.500" r="5.300" /><path d="M6.500 10.500 1 16" /></S>
          <Fit w={128} $size={14.5} $ml={10} $lh={20} $mt={2} $color="#333">Type here to search</Fit>
        </Search>
        <TaskCell $w={48}><svg width="16" height="16"><circle cx="8" cy="8" r="6.900" fill="none" stroke="#fff" strokeWidth="2" /></svg></TaskCell>
        <TaskCell $w={48}><S w={16} h={16} sw="1.200" c="#eee"><path d="M.6 1v1.500h10V1M.6 5h10v6h-10zM.6 15v-1.500h10V15M14.500.8v3M14.500 9v6" /><rect x="13.500" y="5" width="2.500" height="3" fill="#eee" stroke="none" /></S></TaskCell>
        <TaskCell $w={48} $ml={3}><PcBox><PcInner>PC<PcLine /></PcInner></PcBox></TaskCell>
        <TaskCell $w={48} $ml={1} $active $open>
          <svg width="24" height="24" viewBox="0 0 24 24"><defs><linearGradient id="fx" x1=".8" y1="0" x2=".3" y2="1"><stop offset="0" stopColor="#fff04a" /><stop offset=".45" stopColor="#ff9a1f" /><stop offset="1" stopColor="#f5265e" /></linearGradient></defs><path d="M3 5l2 2 2-3 1 3h4c1-3 2-5 4-6 0 2 1 3 3 5 3 3 4 6 3 9-1 5-5 8-10 8S1 19 1 13c0-3 1-5 2-8z" fill="url(#fx)" /><circle cx="12" cy="13" r="4.800" fill="#7a3fe0" /><path d="M6 9c3-1 5 0 6 1l-3 2c-1 3 3 4 5 3-2 4-8 3-9-1z" fill="#ff8a1e" /></svg>
        </TaskCell>
        <TaskCell $w={48} $ml={1}><svg width="22" height="20" viewBox="0 0 22 20"><path d="M0 1h9l2 3H0z" fill="#e0a00e" /><path d="M0 3h22v14H0z" fill="#ffd368" /><path d="M4 18v-8h14v8h-4v-4H8v4z" fill="#3a94dc" /></svg></TaskCell>
        <TaskCell $w={40} $ml={5} $open><svg width="24" height="24" viewBox="0 0 24 24"><rect width="24" height="24" rx="2" fill="#1f9fe0" /><rect x="3" y="3" width="18" height="18" rx="2" fill="#fff" /><path d="M10.500 6H6v12h4.500v-3H9V9h1.500zM13.500 6H18v12h-4.500v-3H15V9h-1.500z" fill="#444" /></svg></TaskCell>
        <TaskCell $w={40} $ml={9} $open><svg width="24" height="22" viewBox="0 0 24 22"><defs><linearGradient id="np" x1="0" y1="0" x2="1" y2="1"><stop offset="0" stopColor="#cdeaf0" /><stop offset="1" stopColor="#3f9fb2" /></linearGradient></defs><path d="M18 2l5 17-8 2z" fill="#d8d3cf" /><path d="M7 1h13l-5 20L0 17z" fill="url(#np)" /><path d="M0 17l15 4 1-3L2 14z" fill="#2f6d7c" opacity=".5" /></svg></TaskCell>
        <TaskCell $w={40} $ml={9} $open><svg width="22" height="22" viewBox="0 0 22 22"><circle cx="11" cy="11" r="11" fill="#fbc116" /><path d="M11 11 1.500 5.500A11 11 0 0 0 10 22l5.500-8.500z" fill="#1f9d58" /><path d="M11 11 1.500 5.500A11 11 0 0 1 20.600 6H11z" fill="#dc4437" /><circle cx="11" cy="11" r="5.300" fill="#fff" /><circle cx="11" cy="11" r="4.200" fill="#4386f3" /></svg></TaskCell>
        <Gap />
        <S w={12} h={8} c="#fff" sw="1.400"><path d="M1 7l5-5.500L11 7" /></S>
        <IconBox $ml={12}><svg width="12" height="17"><rect x="2.500" y="0" width="7" height="13" rx="1.500" fill="#fff" /><path d="M.7 9v2q1 3.500 5.300 3.500T11.300 11V9M6 14v2M3.500 16.300h5" stroke="#fff" fill="none" strokeWidth="1.200" /></svg></IconBox>
        <IconBox $ml={9}><svg width="17" height="12" fill="none" stroke="#fff"><path d="M5 3.500h10v7H5.500M16.300 5.500v3M2 0v3M5 0v3M.5 3h5q0 3-2.500 3T.5 3M3 6v5h2" /><path d="M7 5.500h6v3H7z" fill="#fff" /></svg></IconBox>
        <IconBox $ml={11}><svg width="14" height="13" viewBox="0 0 14 13" fill="none" stroke="#fff" strokeWidth="1.100"><path d="M.6 12.500A12 12 0 0 1 13 .6" stroke="#aaa" /><path d="M3.500 12.500A9.500 9.500 0 0 1 13 4M6.500 12.500A6.500 6.500 0 0 1 13 7M9 12.500A4 4 0 0 1 13 9.500" /><circle cx="12" cy="11.500" r="1.200" fill="#fff" stroke="none" /></svg></IconBox>
        <IconBox $ml={7}><svg width="17" height="14" fill="none" stroke="#fff" strokeWidth="1.100"><path d="M1 4.500h2.500L7 1.500v11l-3.500-3H1zM9 5q1.300 2 0 4M11 3q2.800 4 0 8" /><path d="M13 1.500q4.500 5.500 0 11" stroke="#888" /></svg></IconBox>
        <Fit w={23} $ml={9} $size={12} $color="#fff">ENG</Fit>
        <Clock>
          <Fit w={27} $size={11.6} $lh={18} $color="#fff">10:22</Fit>
          <Fit w={58} $size={11.6} $lh={18} $color="#fff">04/08/2020</Fit>
        </Clock>
        <IconBox $ml={18}><S w={16} h={17} c="#fff" sw="1.300"><path d="M.8 1h14.400v12H11l-3 3-3-3H.8z" /></S></IconBox>
        <Peek />
      </TaskBar>
    </Screen>
  );
}
